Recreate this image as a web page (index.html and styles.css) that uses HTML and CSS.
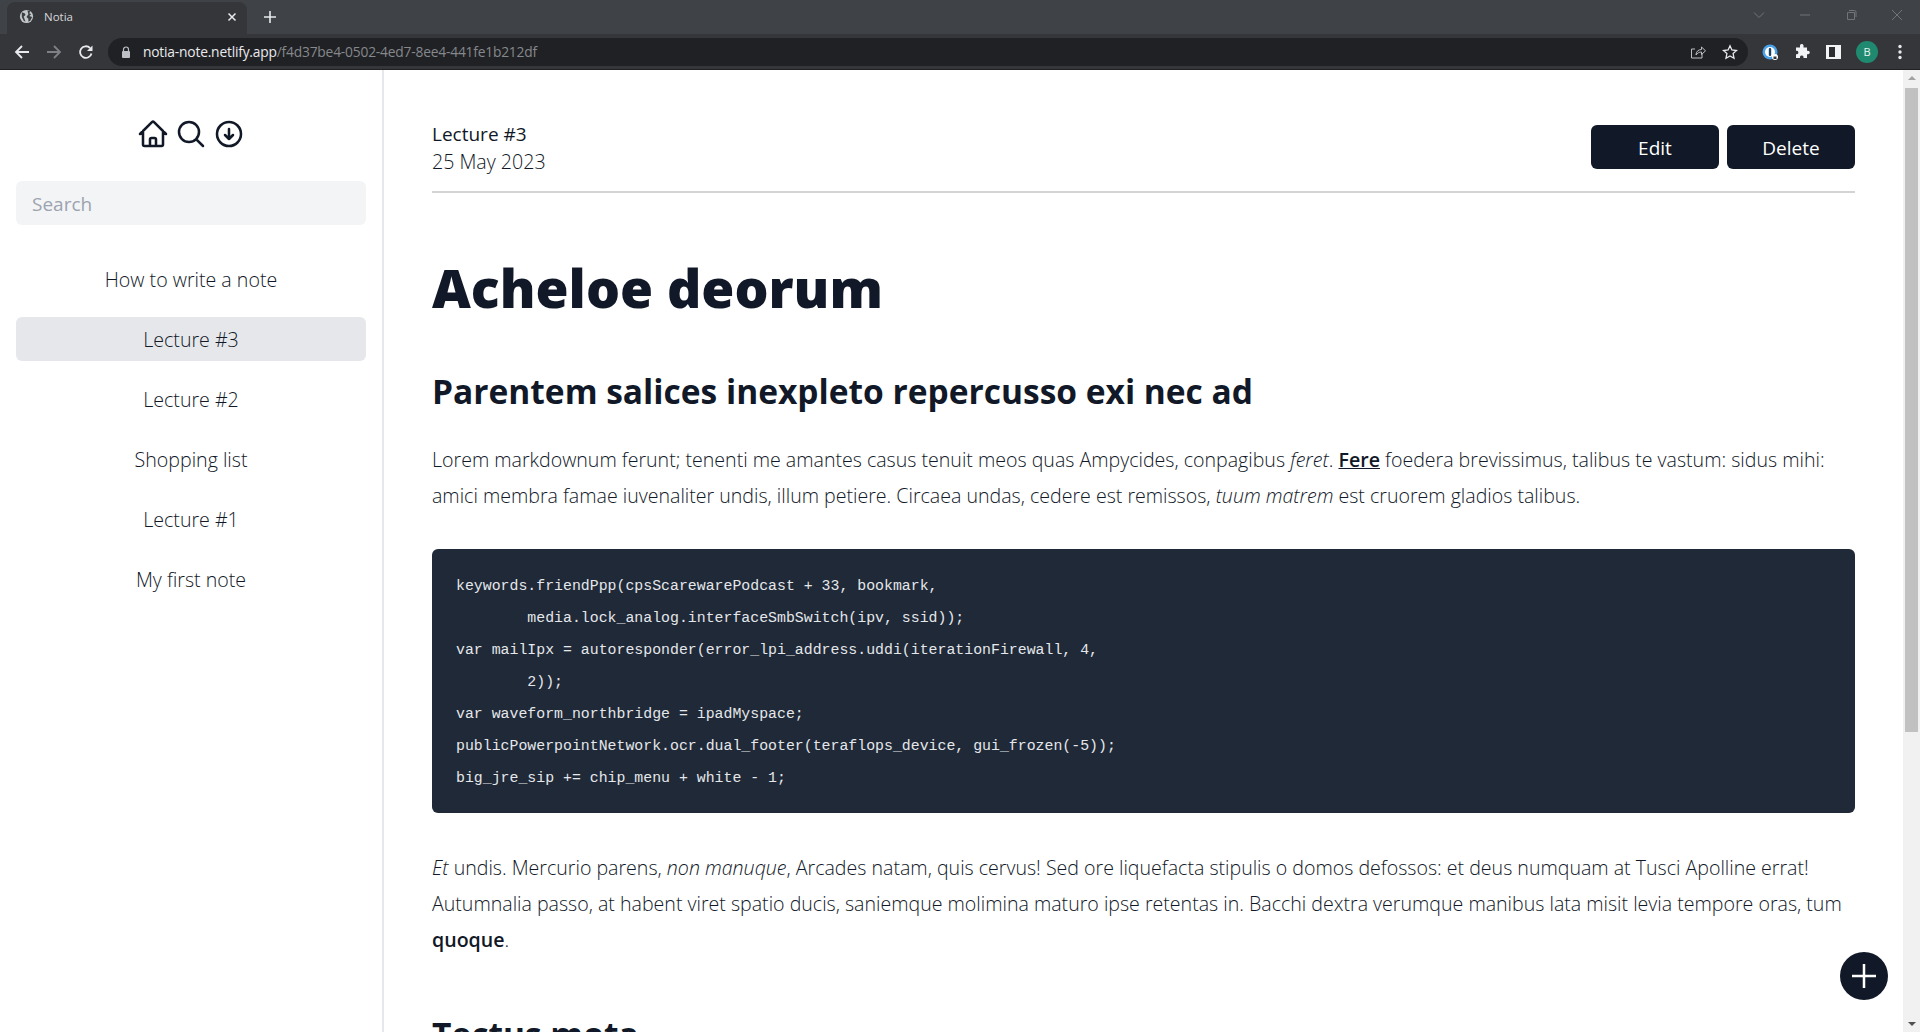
FILE: index.html
```html
<!DOCTYPE html>
<html lang="en">
<head>
    <meta charset="UTF-8">
    <meta name="viewport" content="width=device-width, initial-scale=1.0">
    <title>Notia</title>
    <link rel="stylesheet" href="styles.css">
</head>
<body>

    <!-- Browser chrome -->
    <div class="tabbar">
        <div class="tab">
            <svg class="tab-globe" viewBox="0 0 16 16"><circle cx="8" cy="8" r="7" fill="#c4c7c9"/><path d="M3 3.500l3 1 1 2-2 1.500 1 3 1 2.500-2-1-2-4zM9 1.500l3 1-1 2 2 1-2 2 3 1-2 4-2 1 0-3-2-2 2-3z" fill="#3c4043"/></svg>
            <span class="tab-title">Notia</span>
            <svg class="tab-close" viewBox="0 0 10 10"><path d="M1.500 1.500l7 7M8.500 1.500l-7 7" stroke="#e8eaed" stroke-width="1.500"/></svg>
        </div>
        <svg class="tab-new" viewBox="0 0 12 12"><path d="M6 0v12M0 6h12" stroke="#e8eaed" stroke-width="1.600"/></svg>
        <div class="window-btns">
            <svg viewBox="0 0 12 12"><path d="M1 3.500l5 5 5-5" fill="none" stroke="#70757a"/></svg>
            <svg viewBox="0 0 12 12"><path d="M1 6h10" stroke="#70757a"/></svg>
            <svg viewBox="0 0 12 12"><path d="M3.500 3.500h6v7h-7v-7zM4 1.500h5.500a1.500 1.500 0 0 1 1.500 1.500v5" fill="none" stroke="#70757a"/></svg>
            <svg viewBox="0 0 12 12"><path d="M1 1l10 10M11 1l-10 10" stroke="#70757a"/></svg>
        </div>
    </div>
    <div class="toolbar">
        <svg class="nav-icon" viewBox="0 0 16 16"><path d="M15 8H2M8 2L2 8l6 6" fill="none" stroke="#e8eaed" stroke-width="1.800"/></svg>
        <svg class="nav-icon" viewBox="0 0 16 16"><path d="M1 8h13M8 2l6 6-6 6" fill="none" stroke="#7d8084" stroke-width="1.800"/></svg>
        <svg class="nav-icon" viewBox="0 0 16 16"><path d="M13.500 9.500A5.800 5.800 0 1 1 12 4" fill="none" stroke="#e8eaed" stroke-width="1.800"/><path d="M14.500 1.500v5.500H9z" fill="#e8eaed"/></svg>
        <div class="omnibox">
            <svg class="lock" viewBox="0 0 10 12"><path d="M2.500 5V3.500a2.500 2.500 0 0 1 5 0V5" fill="none" stroke="#bdc1c6" stroke-width="1.200"/><rect x="1" y="5" width="8" height="7" rx="1" fill="#bdc1c6"/></svg>
            <span class="url"><span class="url-host">notia-note.netlify.app</span>/f4d37be4-0502-4ed7-8ee4-441fe1b212df</span>
            <svg class="omni-icon" viewBox="0 0 16 16"><path d="M12 9.500V14H1.500V5H5" fill="none" stroke="#bdc1c6"/><path d="M6 11c0-3.500 2.500-5.500 5.500-5.500V3l4 3.800-4 3.700V8c-2.500 0-4 1-5.500 3z" fill="none" stroke="#bdc1c6"/></svg>
            <svg class="omni-icon" viewBox="0 0 16 16"><path d="M8 1.800l1.900 4.200 4.600.5-3.400 3.100.9 4.600L8 11.900l-4 2.300.9-4.600-3.400-3.100 4.600-.5z" fill="none" stroke="#e8eaed" stroke-width="1.300"/></svg>
        </div>
        <div class="ext-icons">
            <svg viewBox="0 0 16 16"><circle cx="8" cy="8" r="7.500" fill="#4aa3e8"/><circle cx="8" cy="8" r="5" fill="#fff"/><rect x="6.800" y="4" width="2.400" height="8" rx="1" fill="#1c3f66"/><circle cx="13" cy="13" r="3" fill="#fff"/><rect x="11.500" y="12.500" width="3" height="2.500" fill="#35363a"/></svg>
            <svg viewBox="0 0 16 16"><path d="M6 1.500a1.800 1.800 0 0 1 3.500 0V3.500H13v3.200h1a1.800 1.800 0 0 1 0 3.600h-1V14H9.500v-1.200a1.800 1.800 0 0 0-3.500 0V14H2v-3.800h1a1.800 1.800 0 0 0 0-3.500H2V3.500h4z" fill="#f1f3f4"/></svg>
            <svg viewBox="0 0 16 16"><rect width="15" height="14" y="1" fill="#f1f3f4"/><rect x="3" y="3" width="6" height="10" fill="#2b2d30"/></svg>
            <span class="avatar">B</span>
            <svg viewBox="0 0 16 16"><circle cx="8" cy="2.500" r="1.700" fill="#e8eaed"/><circle cx="8" cy="8" r="1.700" fill="#e8eaed"/><circle cx="8" cy="13.500" r="1.700" fill="#e8eaed"/></svg>
        </div>
    </div>

    <!-- App -->
    <div class="app">
        <aside class="sidebar">
            <div class="side-icons">
                <svg viewBox="0 0 24 24"><path d="M2.250 12l8.950-8.950a1.125 1.125 0 0 1 1.590 0L21.750 12M4.500 9.750v10.125c0 .621.504 1.125 1.125 1.125H9.750v-4.875c0-.621.504-1.125 1.125-1.125h2.250c.621 0 1.125.504 1.125 1.125V21h4.125c.621 0 1.125-.504 1.125-1.125V9.750M8.250 21h8.250"/></svg>
                <svg viewBox="0 0 24 24"><path d="M21 21l-5.197-5.197m0 0A7.500 7.500 0 1 0 5.196 5.196a7.500 7.500 0 0 0 10.607 10.607z"/></svg>
                <svg viewBox="0 0 24 24"><path d="M9 12.750l3 3m0 0l3-3m-3 3v-7.500M21 12a9 9 0 1 1-18 0 9 9 0 0 1 18 0z"/></svg>
            </div>
            <div class="search">Search</div>
            <ul class="note-list">
                <li>How to write a note</li>
                <li class="active">Lecture #3</li>
                <li>Lecture #2</li>
                <li>Shopping list</li>
                <li>Lecture #1</li>
                <li>My first note</li>
            </ul>
        </aside>

        <main class="main">
            <div class="note-head">
                <div>
                    <div class="note-title">Lecture #3</div>
                    <div class="note-date">25 May 2023</div>
                </div>
                <div class="note-btns">
                    <button class="btn">Edit</button>
                    <button class="btn">Delete</button>
                </div>
            </div>

            <article class="note-body">
                <h1>Acheloe deorum</h1>
                <h2>Parentem salices inexpleto repercusso exi nec ad</h2>
                <p>Lorem markdownum ferunt; tenenti me amantes casus tenuit meos quas Ampycides, conpagibus <em>feret</em>. <a href="#">Fere</a> foedera brevissimus, talibus te vastum: sidus mihi: amici membra famae iuvenaliter undis, illum petiere. Circaea undas, cedere est remissos, <em>tuum matrem</em> est cruorem gladios talibus.</p>
                <pre><code>keywords.friendPpp(cpsScarewarePodcast + 33, bookmark,
        media.lock_analog.interfaceSmbSwitch(ipv, ssid));
var mailIpx = autoresponder(error_lpi_address.uddi(iterationFirewall, 4,
        2));
var waveform_northbridge = ipadMyspace;
publicPowerpointNetwork.ocr.dual_footer(teraflops_device, gui_frozen(-5));
big_jre_sip += chip_menu + white - 1;</code></pre>
                <p><em>Et</em> undis. Mercurio parens, <em>non manuque</em>, Arcades natam, quis cervus! Sed ore liquefacta stipulis o domos defossos: et deus numquam at Tusci Apolline errat! Autumnalia passo, at habent viret spatio ducis, saniemque molimina maturo ipse retentas in. Bacchi dextra verumque manibus lata misit levia tempore oras, tum <strong>quoque</strong>.</p>
                <h2 class="next-heading">Tectus mota</h2>
            </article>

            <button class="fab"><svg viewBox="0 0 24 24"><path d="M12 0v24M0 12h24"/></svg></button>
        </main>

        <div class="scrollbar">
            <span class="arrow-up"></span>
            <div class="thumb"></div>
            <span class="arrow-down"></span>
        </div>
    </div>

</body>
</html>
```

FILE: styles.css
```css
* {
    box-sizing: border-box;
}

html, body {
    height: 100%;
}

body {
    margin: 0;
    overflow: hidden;
    font-family: "Open Sans", sans-serif;
    color: #111827;
    background-color: #fff;
    display: flex;
    flex-direction: column;
}

/* Browser chrome */
.tabbar {
    height: 34px;
    background-color: #3f4347;
    display: flex;
    align-items: flex-end;
    padding-left: 7px;
    flex-shrink: 0;
}

.tab {
    width: 240px;
    height: 32px;
    background-color: #35363a;
    border-radius: 8px 8px 0 0;
    display: flex;
    align-items: center;
    padding: 0 10px 3px 12px;
}

.tab-globe {
    width: 15px;
    height: 15px;
}

.tab-title {
    margin-left: 10px;
    font-size: 11.500px;
    color: #d5d7da;
    flex: 1;
}

.tab-close {
    width: 10px;
    height: 10px;
}

.tab-new {
    width: 12px;
    height: 12px;
    margin: 0 0 11px 17px;
}

.window-btns {
    margin-left: auto;
    display: flex;
    gap: 34px;
    padding: 0 17px 5px 0;
    align-self: center;
}

.window-btns svg {
    width: 12px;
    height: 12px;
}

.toolbar {
    height: 36px;
    background-color: #35363a;
    border-bottom: 1px solid #202124;
    display: flex;
    align-items: center;
    padding: 0 12px 0 14px;
    flex-shrink: 0;
}

.nav-icon {
    width: 16px;
    height: 16px;
    margin-right: 16px;
}

.omnibox {
    flex: 1;
    height: 28px;
    margin-left: -2px;
    background-color: #202124;
    border-radius: 14px;
    display: flex;
    align-items: center;
    padding: 0 10px 0 13px;
}

.lock {
    width: 10px;
    height: 12px;
}

.url {
    margin-left: 12px;
    flex: 1;
    font-size: 13.800px;
    color: #85888c;
    letter-spacing: -0.2px;
}

.url-host {
    color: #e8eaed;
}

.omni-icon {
    width: 16px;
    height: 16px;
    margin-left: 16px;
}

.ext-icons {
    display: flex;
    align-items: center;
    gap: 16px;
    margin-left: 14px;
}

.ext-icons svg {
    width: 16px;
    height: 16px;
}

.avatar {
    width: 22px;
    height: 22px;
    margin: 0 -2px;
    border-radius: 50%;
    background-color: #1f8a70;
    color: #e8f5f2;
    font-size: 11px;
    display: flex;
    align-items: center;
    justify-content: center;
}

/* App layout */
.app {
    flex: 1;
    display: flex;
    min-height: 0;
}

.sidebar {
    width: 384px;
    flex-shrink: 0;
    border-right: 2px solid #e5e7eb;
    padding: 48px 16px 0;
}

.side-icons {
    display: flex;
    justify-content: center;
    gap: 6px;
}

.side-icons svg {
    width: 32px;
    height: 32px;
    fill: none;
    stroke: #111827;
    stroke-width: 1.900;
    stroke-linecap: round;
    stroke-linejoin: round;
}

.search {
    height: 44px;
    margin-top: 31px;
    padding: 1px 16px 0;
    background-color: #f3f4f6;
    border-radius: 6px;
    font-size: 19px;
    line-height: 44px;
    color: #9ca3af;
}

.note-list {
    list-style: none;
    margin: 32px 0 0;
    padding: 0;
}

.note-list li {
    height: 44px;
    line-height: 46px;
    margin-top: 16px;
    text-align: center;
    font-size: 19.600px;
    font-weight: 300;
    color: #111827;
    border-radius: 6px;
}

.note-list li.active {
    background-color: #e5e7eb;
}

.main {
    flex: 1;
    position: relative;
    overflow: hidden;
    padding: 50px 48px 0;
}

.note-head {
    display: flex;
    justify-content: space-between;
    align-items: flex-end;
    padding-bottom: 15px;
    border-bottom: 2px solid #d4d4d4;
}

.note-title {
    font-size: 19px;
    line-height: 28px;
    font-weight: 500;
}

.note-date {
    font-size: 19.600px;
    line-height: 28px;
    font-weight: 300;
}

.note-btns {
    display: flex;
    gap: 8px;
    margin-bottom: 7px;
}

.btn {
    width: 128px;
    height: 44px;
    background-color: #111827;
    color: #fff;
    border: none;
    border-radius: 6px;
    font-family: inherit;
    font-size: 19px;
    padding-top: 2px;
}

.note-body {
    font-size: 19.580px;
    line-height: 36px;
    font-weight: 300;
    color: #111827;
}

.note-body h1 {
    margin: 65px 0 0;
    font-size: 53.500px;
    line-height: 60px;
    font-weight: 800;
    color: #111827;
}

.note-body h2 {
    margin: 53px 0 0;
    font-size: 33.500px;
    line-height: 40px;
    font-weight: 700;
    color: #111827;
}

.note-body .next-heading {
    margin-top: 56px;
}

.note-body p {
    margin: 31px 0 0;
}

.note-body a {
    color: #111827;
    font-weight: 600;
}

.note-body strong {
    color: #111827;
    font-weight: 600;
}

.note-body pre {
    margin: 35px 0 0;
    padding: 21px 24px 19px;
    background-color: #1f2937;
    color: #e5e7eb;
    border-radius: 6px;
    font-family: "Liberation Mono", monospace;
    font-size: 14.860px;
    font-weight: 400;
    line-height: 32px;
    overflow: hidden;
}

.note-body code {
    font-family: inherit;
    font-size: inherit;
}

.note-body pre + p {
    margin-top: 37px;
}

.fab {
    position: absolute;
    right: 15px;
    bottom: 32px;
    width: 48px;
    height: 48px;
    border-radius: 50%;
    border: none;
    background-color: #111827;
    display: flex;
    align-items: center;
    justify-content: center;
    padding: 0;
}

.fab svg {
    width: 24px;
    height: 24px;
    fill: none;
    stroke: #fff;
    stroke-width: 2.500;
}

/* Fake page scrollbar */
.scrollbar {
    width: 17px;
    flex-shrink: 0;
    background-color: #f1f1f1;
    display: flex;
    flex-direction: column;
    align-items: center;
    position: relative;
}

.arrow-up, .arrow-down {
    width: 0;
    height: 0;
    border-left: 4px solid transparent;
    border-right: 4px solid transparent;
    position: absolute;
}

.arrow-up {
    top: 6px;
    border-bottom: 4px solid #a3a3a3;
}

.arrow-down {
    bottom: 6px;
    border-top: 4px solid #505050;
}

.thumb {
    width: 13px;
    height: 644px;
    margin-top: 18px;
    background-color: #c1c1c1;
}
```
